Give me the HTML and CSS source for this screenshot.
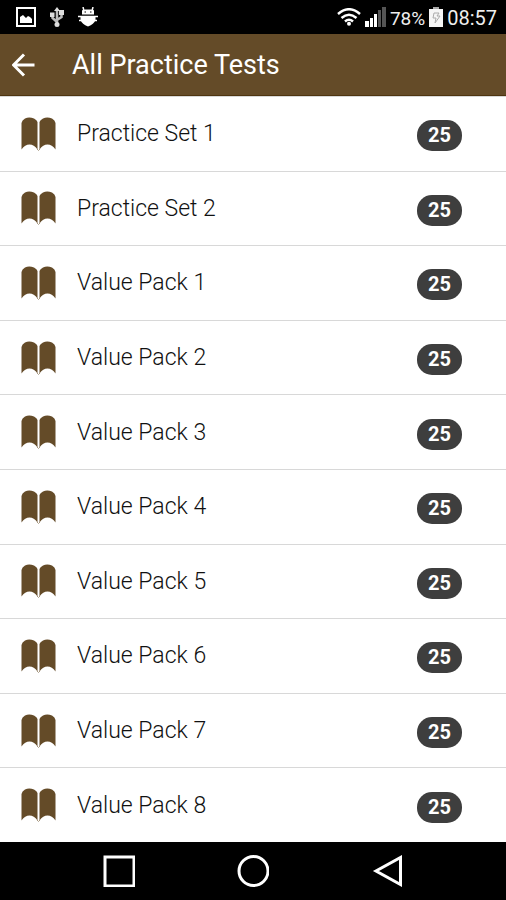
FILE: index.html
```html
<!DOCTYPE html>
<html lang="en">
<head>
<meta charset="utf-8">
<meta name="viewport" content="width=device-width, initial-scale=1">
<title>All Practice Tests</title>
<link rel="stylesheet" href="styles.css">
</head>
<body>
<svg class="defs" aria-hidden="true">
  <symbol id="book" viewBox="0 0 36 34">
    <path d="M1.500 6Q2 3 5 1.500Q9 -.5 14 1.500Q17 3 17.500 5V32.500Q14 27.500 9.500 27.500Q5 27.500 1.500 32.500Z"/>
    <path d="M19.500 5Q20 3 23 1.500Q27 -.5 32 1.500Q35 3 35.500 6V32.500Q32 27.500 27.500 27.500Q23 27.500 19.500 32.500Z"/>
    <path class="spine" d="M17 32L18.500 33.500L20 32"/>
  </symbol>
</svg>
<div class="status">
  <div class="status-left">
    <svg width="20" height="20" viewBox="0 0 20 20"><path fill="none" stroke="#fff" stroke-width="2" d="M1 1H19V19H1Z"/><path fill="#fff" d="M4 16V10L7 8L10 11L12 9L14 10L16 12V16Z"/></svg>
    <svg width="14" height="20" viewBox="0 0 14 20"><path fill="none" stroke="#bbb" stroke-width="2.500" d="M7 3V18M7 15L2.500 11V7M7 13L11.500 10V5"/><path fill="#ddd" d="M7 0L10 4H4ZM0 5.500H4.500V10H0ZM9 3H14V8H9Z"/><circle cx="7" cy="17.500" r="2.500" fill="#ddd"/></svg>
    <svg width="20" height="20" viewBox="0 0 20 20"><path fill="none" stroke="#fff" stroke-width="1.500" d="M5 0L6 4M15 0L14 4M0 9.500H20M1 13.500H19"/><path fill="#fff" d="M4 7.500V4Q4 2.500 7 2.500H13Q16 2.500 16 4V7.500ZM2.500 9H17.500V13Q16 17 10 19.500Q4 17 2.500 13Z"/><path stroke="#000" stroke-width="1" d="M6.500 5H8M12 5H13.500"/></svg>
  </div>
  <div class="status-right">
    <svg width="24" height="18" viewBox="0 0 24 18"><g fill="none" stroke="#fff" stroke-width="2.500"><path d="M1 6Q12-3.500 23 6"/><path d="M4.500 10Q12 3.500 19.500 10"/><path d="M8 13.500Q12 10 16 13.500"/></g><circle cx="12" cy="15.800" r="2" fill="#fff"/></svg>
    <svg width="21" height="20" viewBox="0 0 21 20"><path fill="#fff" d="M0 14H4V20H0ZM5 11H8V20H5ZM9 7H12V20H9Z"/><path fill="#555" d="M13 3H16V20H13ZM17 0H21V20H17Z"/></svg>
    <span class="percent">78%</span>
    <svg width="14" height="20" viewBox="0 0 14 20"><path fill="#aaa" d="M4 0H10V2H4Z"/><path fill="#f5f5f5" d="M0 2H14V20H0Z"/><path fill="none" stroke="#aaa" d="M5 6H10L8 9H11L6 16L7 11H4Z"/></svg>
    <span class="time">08:57</span>
  </div>
</div>
<header class="bar">
  <button class="back" type="button" aria-label="Back"><svg width="24" height="24" viewBox="0 0 24 24"><path fill="none" stroke="#fff" stroke-width="3" d="M22.500 12H1.500M12 1.500L1.500 12L12 22.500"/></svg></button>
  <h1>All Practice Tests</h1>
</header>
<ul class="list">
  <li><a href="#"><svg class="book"><use href="#book"/></svg><span class="name">Practice Set 1</span><span class="badge">25</span></a></li>
  <li><a href="#"><svg class="book"><use href="#book"/></svg><span class="name">Practice Set 2</span><span class="badge">25</span></a></li>
  <li><a href="#"><svg class="book"><use href="#book"/></svg><span class="name">Value Pack 1</span><span class="badge">25</span></a></li>
  <li><a href="#"><svg class="book"><use href="#book"/></svg><span class="name">Value Pack 2</span><span class="badge">25</span></a></li>
  <li><a href="#"><svg class="book"><use href="#book"/></svg><span class="name">Value Pack 3</span><span class="badge">25</span></a></li>
  <li><a href="#"><svg class="book"><use href="#book"/></svg><span class="name">Value Pack 4</span><span class="badge">25</span></a></li>
  <li><a href="#"><svg class="book"><use href="#book"/></svg><span class="name">Value Pack 5</span><span class="badge">25</span></a></li>
  <li><a href="#"><svg class="book"><use href="#book"/></svg><span class="name">Value Pack 6</span><span class="badge">25</span></a></li>
  <li><a href="#"><svg class="book"><use href="#book"/></svg><span class="name">Value Pack 7</span><span class="badge">25</span></a></li>
  <li><a href="#"><svg class="book"><use href="#book"/></svg><span class="name">Value Pack 8</span><span class="badge">25</span></a></li>
</ul>
<nav class="nav">
  <button type="button" aria-label="Recent apps"><svg width="32" height="32" viewBox="0 0 32 32"><path d="M2 2H31V31H2Z"/></svg></button>
  <button type="button" aria-label="Home"><svg width="32" height="32" viewBox="0 0 32 32"><circle cx="16.500" cy="16" r="14.500"/></svg></button>
  <button type="button" aria-label="Back"><svg width="32" height="32" viewBox="0 0 32 32"><path d="M29.500 2.500V29.500L5 16Z"/></svg></button>
</nav>
</body>
</html>
```
FILE: styles.css
```css
* {
  box-sizing: border-box;
}

body {
  margin: 0;
  min-height: 100vh;
  display: flex;
  flex-direction: column;
  background: #fff;
  color: #111;
  font-family: Roboto, "Liberation Sans", sans-serif;
}

svg {
  display: block;
  flex: none;
}

button {
  padding: 0;
  border: 0;
  background: none;
}

.defs {
  position: absolute;
  width: 0;
  height: 0;
}

.status {
  display: flex;
  justify-content: space-between;
  align-items: center;
  height: 34px;
  padding: 0 9px 0 16px;
  background: #000;
  color: #eee;
  font-size: 20px;
}

.status-left {
  display: flex;
  gap: 14px;
}

.status-right {
  display: flex;
  align-items: center;
  gap: 4px;
}

.status-right span {
  padding-top: 2px;
}

.percent {
  font-size: 19px;
}

.bar {
  display: flex;
  align-items: center;
  gap: 36px;
  height: 62px;
  padding: 0 12px;
  background: #644b28;
  border-bottom: 1px solid #4e3510;
  color: #fff;
}

h1 {
  margin: 0;
  font-size: 27px;
  font-weight: 400;
}

.list {
  flex: 1;
  display: grid;
  grid-auto-rows: 1fr;
  margin: 0;
  padding: 0;
  list-style: none;
}

.list li {
  display: flex;
  border-top: 1px solid #d8d8d8;
}

.list a {
  flex: 1;
  display: flex;
  align-items: center;
  padding: 0 44px 0 20px;
  color: inherit;
  text-decoration: none;
}

.book {
  width: 36px;
  height: 34px;
  fill: #644b28;
}

.spine {
  fill: none;
  stroke: #a89880;
}

.name {
  flex: 1;
  margin-left: 21px;
  font-size: 23px;
  font-weight: 300;
}

.badge {
  width: 45px;
  margin-top: 4px;
  border-radius: 15px;
  background: #3e3e3e;
  color: #fff;
  font-size: 20px;
  font-weight: 700;
  line-height: 31px;
  text-align: center;
}

.nav {
  display: flex;
  justify-content: center;
  align-items: center;
  gap: 102px;
  height: 58px;
  background: #000;
}

.nav svg {
  fill: none;
  stroke: #fff;
  stroke-width: 3;
}
```
